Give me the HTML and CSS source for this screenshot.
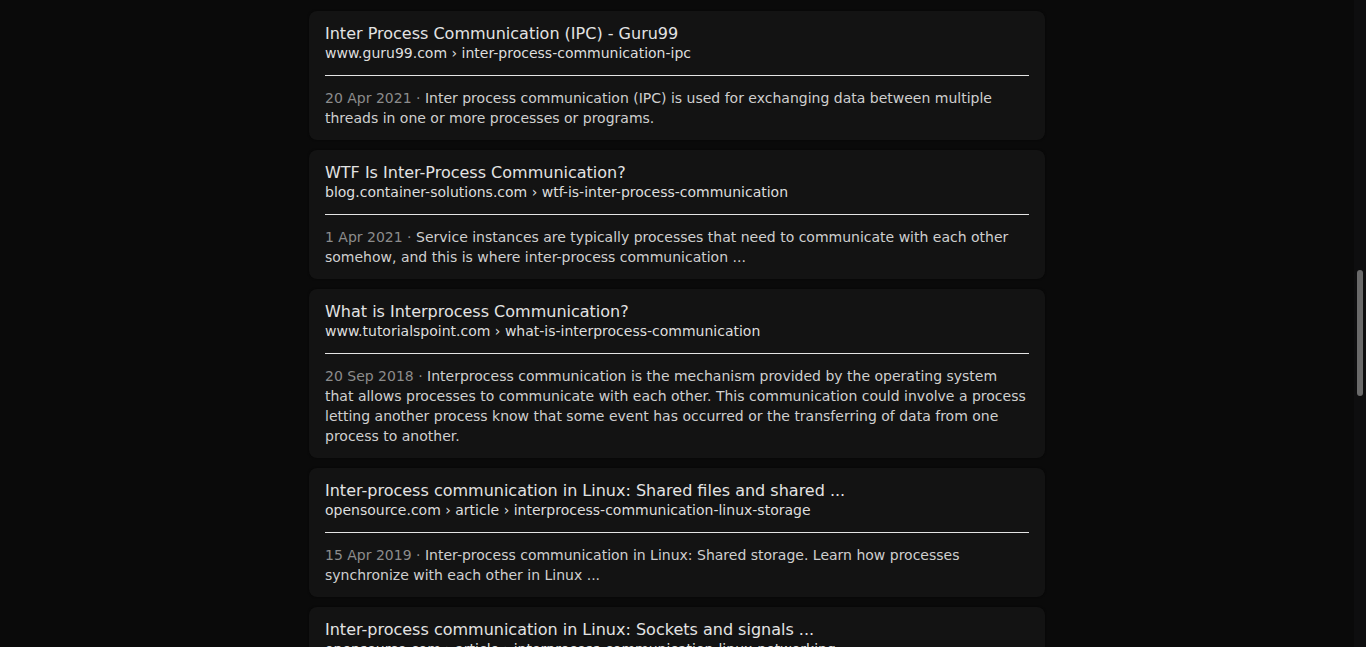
FILE: index.html
```html
<!DOCTYPE html>
<html lang="en">
<head>
<meta charset="utf-8">
<title>Results</title>
<link rel="stylesheet" href="styles.css">
</head>
<body>
<div class="page">
  <main class="results">
    <article class="card">
      <h3 class="title">Inter Process Communication (IPC) - Guru99</h3>
      <div class="url">www.guru99.com › inter-process-communication-ipc</div>
      <hr class="divider">
      <p class="snippet"><span class="date">20 Apr 2021 · </span>Inter process communication (IPC) is used for exchanging data between multiple threads in one or more processes or programs.</p>
    </article>
    <article class="card">
      <h3 class="title">WTF Is Inter-Process Communication?</h3>
      <div class="url">blog.container-solutions.com › wtf-is-inter-process-communication</div>
      <hr class="divider">
      <p class="snippet"><span class="date">1 Apr 2021 · </span>Service instances are typically processes that need to communicate with each other somehow, and this is where inter-process communication ...</p>
    </article>
    <article class="card">
      <h3 class="title">What is Interprocess Communication?</h3>
      <div class="url">www.tutorialspoint.com › what-is-interprocess-communication</div>
      <hr class="divider">
      <p class="snippet"><span class="date">20 Sep 2018 · </span>Interprocess communication is the mechanism provided by the operating system that allows processes to communicate with each other. This communication could involve a process letting another process know that some event has occurred or the transferring of data from one process to another.</p>
    </article>
    <article class="card">
      <h3 class="title">Inter-process communication in Linux: Shared files and shared ...</h3>
      <div class="url">opensource.com › article › interprocess-communication-linux-storage</div>
      <hr class="divider">
      <p class="snippet"><span class="date">15 Apr 2019 · </span>Inter-process communication in Linux: Shared storage. Learn how processes synchronize with each other in Linux ...</p>
    </article>
    <article class="card">
      <h3 class="title">Inter-process communication in Linux: Sockets and signals ...</h3>
      <div class="url">opensource.com › article › interprocess-communication-linux-networking</div>
      <hr class="divider">
      <p class="snippet"><span class="date">17 Apr 2019 · </span>Inter-process communication in Linux: Sockets and signals. Learn how processes synchronize with each other in Linux ...</p>
    </article>
  </main>
</div>
<div class="scrollbar"><div class="thumb"></div></div>
</body>
</html>
```
FILE: styles.css
```css
html, body {
  margin: 0;
  padding: 0;
  height: 100%;
  overflow: hidden;
  background: #0a0a0a;
}
body {
  font-family: "DejaVu Sans", "Liberation Sans", sans-serif;
  color: #e0e0e0;
}
.page {
  margin-right: 12px;
  padding-top: 11px;
}
.results {
  width: 736px;
  margin: 0 auto;
  display: flex;
  flex-direction: column;
  gap: 10px;
}
.card {
  background: #131313;
  border-radius: 8px;
  padding: 13px 16px 12px;
  box-shadow: 0 0 2px rgba(0, 0, 0, 0.6);
}
.title {
  margin: 0;
  font-size: 16px;
  font-weight: normal;
  line-height: 19px;
  color: #e3e3e3;
}
.url {
  font-size: 14px;
  line-height: 20px;
  color: #dedede;
}
.divider {
  border: 0;
  height: 1px;
  background: #e4e4e4;
  margin: 12px 0;
}
.snippet {
  margin: 0;
  font-size: 14px;
  line-height: 20px;
  color: #cfcfcf;
}
.date {
  color: #8c8c8c;
}
.scrollbar {
  position: fixed;
  top: 0;
  right: 0;
  width: 12px;
  height: 100%;
  background: #0e0e0f;
}
.thumb {
  position: absolute;
  left: 3px;
  top: 270px;
  width: 6px;
  height: 126px;
  border-radius: 3px;
  background: #6a6a6a;
}
```
